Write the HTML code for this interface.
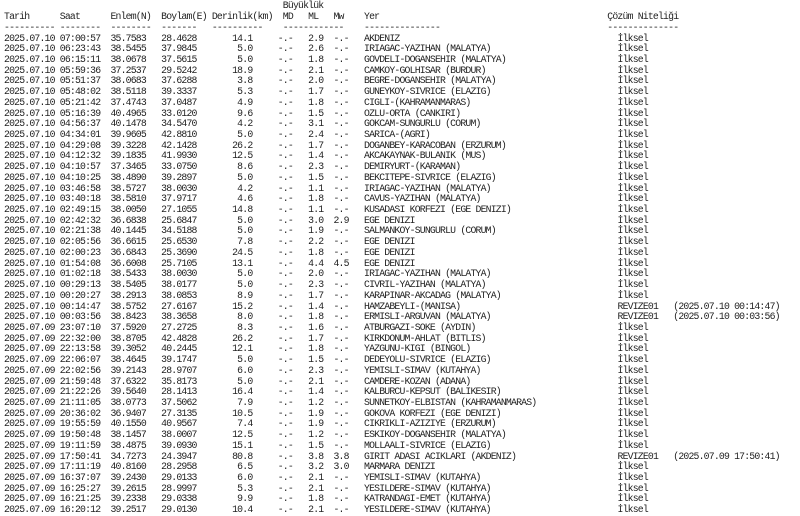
<!DOCTYPE html>
<html><head><meta charset="utf-8"><style>
html,body{margin:0;padding:0;background:#fff;width:800px;height:514px;overflow:hidden}
#p{position:absolute;left:4px;top:1.4px;font-family:"Liberation Mono","DejaVu Sans Mono",monospace;font-size:9.8px;letter-spacing:-0.81px;color:#222}
.l{position:relative;height:10.73px;line-height:10.73px;white-space:pre}
.y{position:absolute;left:360px;top:0}
.r{position:absolute;left:613.5px;top:0}
.h{position:absolute;left:603.3px;top:0}
</style></head><body><div id="p"><div class="l">                                                       Büyüklük</div><div class="l">Tarih      Saat      Enlem(N)  Boylam(E) Derinlik(km)  MD   ML   Mw<span class="y">Yer</span><span class="h">Çözüm Niteliği</span></div><div class="l">---------- --------  --------  -------   ----------    ------------<span class="y">---------------</span><span class="h">--------------</span></div><div class="l">2025.07.10 07:00:57  35.7583   28.4628       14.1     -.-   2.9  -.-<span class="y">AKDENIZ</span><span class="r">İlksel</span></div><div class="l">2025.07.10 06:23:43  38.5455   37.9845        5.0     -.-   2.6  -.-<span class="y">IRIAGAC-YAZIHAN (MALATYA)</span><span class="r">İlksel</span></div><div class="l">2025.07.10 06:15:11  38.0678   37.5615        5.0     -.-   1.8  -.-<span class="y">GOVDELI-DOGANSEHIR (MALATYA)</span><span class="r">İlksel</span></div><div class="l">2025.07.10 05:59:36  37.2537   29.5242       18.9     -.-   2.1  -.-<span class="y">CAMKOY-GOLHISAR (BURDUR)</span><span class="r">İlksel</span></div><div class="l">2025.07.10 05:51:37  38.0683   37.6288        3.8     -.-   2.0  -.-<span class="y">BEGRE-DOGANSEHIR (MALATYA)</span><span class="r">İlksel</span></div><div class="l">2025.07.10 05:48:02  38.5118   39.3337        5.3     -.-   1.7  -.-<span class="y">GUNEYKOY-SIVRICE (ELAZIG)</span><span class="r">İlksel</span></div><div class="l">2025.07.10 05:21:42  37.4743   37.0487        4.9     -.-   1.8  -.-<span class="y">CIGLI-(KAHRAMANMARAS)</span><span class="r">İlksel</span></div><div class="l">2025.07.10 05:16:39  40.4965   33.0120        9.6     -.-   1.5  -.-<span class="y">OZLU-ORTA (CANKIRI)</span><span class="r">İlksel</span></div><div class="l">2025.07.10 04:56:37  40.1478   34.5470        4.2     -.-   3.1  -.-<span class="y">GOKCAM-SUNGURLU (CORUM)</span><span class="r">İlksel</span></div><div class="l">2025.07.10 04:34:01  39.9605   42.8810        5.0     -.-   2.4  -.-<span class="y">SARICA-(AGRI)</span><span class="r">İlksel</span></div><div class="l">2025.07.10 04:29:08  39.3228   42.1428       26.2     -.-   1.7  -.-<span class="y">DOGANBEY-KARACOBAN (ERZURUM)</span><span class="r">İlksel</span></div><div class="l">2025.07.10 04:12:32  39.1835   41.9930       12.5     -.-   1.4  -.-<span class="y">AKCAKAYNAK-BULANIK (MUS)</span><span class="r">İlksel</span></div><div class="l">2025.07.10 04:10:57  37.3465   33.0750        8.6     -.-   2.3  -.-<span class="y">DEMIRYURT-(KARAMAN)</span><span class="r">İlksel</span></div><div class="l">2025.07.10 04:10:25  38.4890   39.2897        5.0     -.-   1.5  -.-<span class="y">BEKCITEPE-SIVRICE (ELAZIG)</span><span class="r">İlksel</span></div><div class="l">2025.07.10 03:46:58  38.5727   38.0030        4.2     -.-   1.1  -.-<span class="y">IRIAGAC-YAZIHAN (MALATYA)</span><span class="r">İlksel</span></div><div class="l">2025.07.10 03:40:18  38.5810   37.9717        4.6     -.-   1.8  -.-<span class="y">CAVUS-YAZIHAN (MALATYA)</span><span class="r">İlksel</span></div><div class="l">2025.07.10 02:49:15  38.0050   27.1055       14.8     -.-   1.1  -.-<span class="y">KUSADASI KORFEZI (EGE DENIZI)</span><span class="r">İlksel</span></div><div class="l">2025.07.10 02:42:32  36.6838   25.6847        5.0     -.-   3.0  2.9<span class="y">EGE DENIZI</span><span class="r">İlksel</span></div><div class="l">2025.07.10 02:21:38  40.1445   34.5188        5.0     -.-   1.9  -.-<span class="y">SALMANKOY-SUNGURLU (CORUM)</span><span class="r">İlksel</span></div><div class="l">2025.07.10 02:05:56  36.6615   25.6530        7.8     -.-   2.2  -.-<span class="y">EGE DENIZI</span><span class="r">İlksel</span></div><div class="l">2025.07.10 02:00:23  36.6843   25.3690       24.5     -.-   1.8  -.-<span class="y">EGE DENIZI</span><span class="r">İlksel</span></div><div class="l">2025.07.10 01:54:08  36.6008   25.7105       13.1     -.-   4.4  4.5<span class="y">EGE DENIZI</span><span class="r">İlksel</span></div><div class="l">2025.07.10 01:02:18  38.5433   38.0030        5.0     -.-   2.0  -.-<span class="y">IRIAGAC-YAZIHAN (MALATYA)</span><span class="r">İlksel</span></div><div class="l">2025.07.10 00:29:13  38.5405   38.0177        5.0     -.-   2.3  -.-<span class="y">CIVRIL-YAZIHAN (MALATYA)</span><span class="r">İlksel</span></div><div class="l">2025.07.10 00:20:27  38.2913   38.0853        8.9     -.-   1.7  -.-<span class="y">KARAPINAR-AKCADAG (MALATYA)</span><span class="r">İlksel</span></div><div class="l">2025.07.10 00:14:47  38.5752   27.6167       15.2     -.-   1.4  -.-<span class="y">HAMZABEYLI-(MANISA)</span><span class="r">REVIZE01   (2025.07.10 00:14:47)</span></div><div class="l">2025.07.10 00:03:56  38.8423   38.3658        8.0     -.-   1.8  -.-<span class="y">ERMISLI-ARGUVAN (MALATYA)</span><span class="r">REVIZE01   (2025.07.10 00:03:56)</span></div><div class="l">2025.07.09 23:07:10  37.5920   27.2725        8.3     -.-   1.6  -.-<span class="y">ATBURGAZI-SOKE (AYDIN)</span><span class="r">İlksel</span></div><div class="l">2025.07.09 22:32:00  38.8705   42.4828       26.2     -.-   1.7  -.-<span class="y">KIRKDONUM-AHLAT (BITLIS)</span><span class="r">İlksel</span></div><div class="l">2025.07.09 22:13:58  39.3052   40.2445       12.1     -.-   1.8  -.-<span class="y">YAZGUNU-KIGI (BINGOL)</span><span class="r">İlksel</span></div><div class="l">2025.07.09 22:06:07  38.4645   39.1747        5.0     -.-   1.5  -.-<span class="y">DEDEYOLU-SIVRICE (ELAZIG)</span><span class="r">İlksel</span></div><div class="l">2025.07.09 22:02:56  39.2143   28.9707        6.0     -.-   2.3  -.-<span class="y">YEMISLI-SIMAV (KUTAHYA)</span><span class="r">İlksel</span></div><div class="l">2025.07.09 21:59:48  37.6322   35.8173        5.0     -.-   2.1  -.-<span class="y">CAMDERE-KOZAN (ADANA)</span><span class="r">İlksel</span></div><div class="l">2025.07.09 21:22:26  39.5640   28.1413       16.4     -.-   1.4  -.-<span class="y">KALBURCU-KEPSUT (BALIKESIR)</span><span class="r">İlksel</span></div><div class="l">2025.07.09 21:11:05  38.0773   37.5062        7.9     -.-   1.2  -.-<span class="y">SUNNETKOY-ELBISTAN (KAHRAMANMARAS)</span><span class="r">İlksel</span></div><div class="l">2025.07.09 20:36:02  36.9407   27.3135       10.5     -.-   1.9  -.-<span class="y">GOKOVA KORFEZI (EGE DENIZI)</span><span class="r">İlksel</span></div><div class="l">2025.07.09 19:55:59  40.1550   40.9567        7.4     -.-   1.9  -.-<span class="y">CIKRIKLI-AZIZIYE (ERZURUM)</span><span class="r">İlksel</span></div><div class="l">2025.07.09 19:50:48  38.1457   38.0007       12.5     -.-   1.2  -.-<span class="y">ESKIKOY-DOGANSEHIR (MALATYA)</span><span class="r">İlksel</span></div><div class="l">2025.07.09 19:11:59  38.4875   39.0930       15.1     -.-   1.5  -.-<span class="y">MOLLAALI-SIVRICE (ELAZIG)</span><span class="r">İlksel</span></div><div class="l">2025.07.09 17:50:41  34.7273   24.3947       80.8     -.-   3.8  3.8<span class="y">GIRIT ADASI ACIKLARI (AKDENIZ)</span><span class="r">REVIZE01   (2025.07.09 17:50:41)</span></div><div class="l">2025.07.09 17:11:19  40.8160   28.2958        6.5     -.-   3.2  3.0<span class="y">MARMARA DENIZI</span><span class="r">İlksel</span></div><div class="l">2025.07.09 16:37:07  39.2430   29.0133        6.0     -.-   2.1  -.-<span class="y">YEMISLI-SIMAV (KUTAHYA)</span><span class="r">İlksel</span></div><div class="l">2025.07.09 16:25:27  39.2615   28.9997        5.3     -.-   2.1  -.-<span class="y">YESILDERE-SIMAV (KUTAHYA)</span><span class="r">İlksel</span></div><div class="l">2025.07.09 16:21:25  39.2338   29.0338        9.9     -.-   1.8  -.-<span class="y">KATRANDAGI-EMET (KUTAHYA)</span><span class="r">İlksel</span></div><div class="l">2025.07.09 16:20:12  39.2517   29.0130       10.4     -.-   2.1  -.-<span class="y">YESILDERE-SIMAV (KUTAHYA)</span><span class="r">İlksel</span></div></div></body></html>
